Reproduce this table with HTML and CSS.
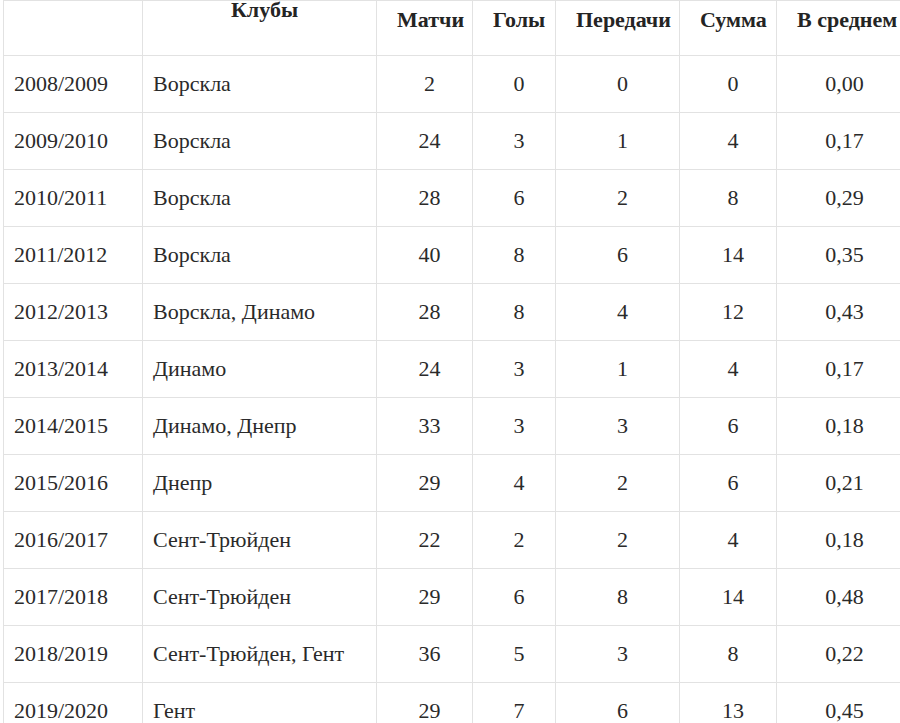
FILE: index.html
```html
<!DOCTYPE html>
<html lang="ru">
<head>
<meta charset="utf-8">
<title>Статистика</title>
<link rel="stylesheet" href="styles.css">
</head>
<body>
<table class="stats">
  <colgroup>
    <col class="c-season">
    <col class="c-club">
    <col class="c-m">
    <col class="c-g">
    <col class="c-a">
    <col class="c-s">
    <col class="c-avg">
  </colgroup>
  <thead>
    <tr>
      <th></th>
      <th class="club-head">Клубы</th>
      <th>Матчи</th>
      <th>Голы</th>
      <th>Передачи</th>
      <th>Сумма</th>
      <th>В среднем</th>
    </tr>
  </thead>
  <tbody>
    <tr><td class="l">2008/2009</td><td class="l">Ворскла</td><td>2</td><td>0</td><td>0</td><td>0</td><td>0,00</td></tr>
    <tr><td class="l">2009/2010</td><td class="l">Ворскла</td><td>24</td><td>3</td><td>1</td><td>4</td><td>0,17</td></tr>
    <tr><td class="l">2010/2011</td><td class="l">Ворскла</td><td>28</td><td>6</td><td>2</td><td>8</td><td>0,29</td></tr>
    <tr><td class="l">2011/2012</td><td class="l">Ворскла</td><td>40</td><td>8</td><td>6</td><td>14</td><td>0,35</td></tr>
    <tr><td class="l">2012/2013</td><td class="l">Ворскла, Динамо</td><td>28</td><td>8</td><td>4</td><td>12</td><td>0,43</td></tr>
    <tr><td class="l">2013/2014</td><td class="l">Динамо</td><td>24</td><td>3</td><td>1</td><td>4</td><td>0,17</td></tr>
    <tr><td class="l">2014/2015</td><td class="l">Динамо, Днепр</td><td>33</td><td>3</td><td>3</td><td>6</td><td>0,18</td></tr>
    <tr><td class="l">2015/2016</td><td class="l">Днепр</td><td>29</td><td>4</td><td>2</td><td>6</td><td>0,21</td></tr>
    <tr><td class="l">2016/2017</td><td class="l">Сент-Трюйден</td><td>22</td><td>2</td><td>2</td><td>4</td><td>0,18</td></tr>
    <tr><td class="l">2017/2018</td><td class="l">Сент-Трюйден</td><td>29</td><td>6</td><td>8</td><td>14</td><td>0,48</td></tr>
    <tr><td class="l">2018/2019</td><td class="l">Сент-Трюйден, Гент</td><td>36</td><td>5</td><td>3</td><td>8</td><td>0,22</td></tr>
    <tr><td class="l">2019/2020</td><td class="l">Гент</td><td>29</td><td>7</td><td>6</td><td>13</td><td>0,45</td></tr>
  </tbody>
</table>
</body>
</html>
```

FILE: styles.css
```css
html, body {
  margin: 0;
  padding: 0;
  overflow: hidden;
  background: #ffffff;
}

body {
  font-family: "Liberation Serif", "Times New Roman", serif;
  font-size: 22px;
  color: #2a2a2a;
}

.stats {
  border-collapse: collapse;
  table-layout: fixed;
  width: 899px;
  margin-left: 3px;
}

.c-season { width: 139px; }
.c-club { width: 234px; }
.c-m { width: 96px; }
.c-g { width: 83px; }
.c-a { width: 124px; }
.c-s { width: 97px; }
.c-avg { width: 126px; }

.stats th,
.stats td {
  border: 1px solid #e2e2e2;
  padding: 15px 10px 15px 20px;
  line-height: 26px;
  text-align: center;
  white-space: nowrap;
}

.stats th {
  font-weight: bold;
  color: #242424;
  vertical-align: top;
  padding-top: 6px;
  padding-bottom: 22px;
}

.stats th.club-head {
  padding-top: 0;
  line-height: 18px;
}

.stats th.last-head {
  padding-left: 16px;
}

.stats td {
  vertical-align: middle;
}

.stats td.l {
  text-align: left;
  padding-left: 10px;
}
```
